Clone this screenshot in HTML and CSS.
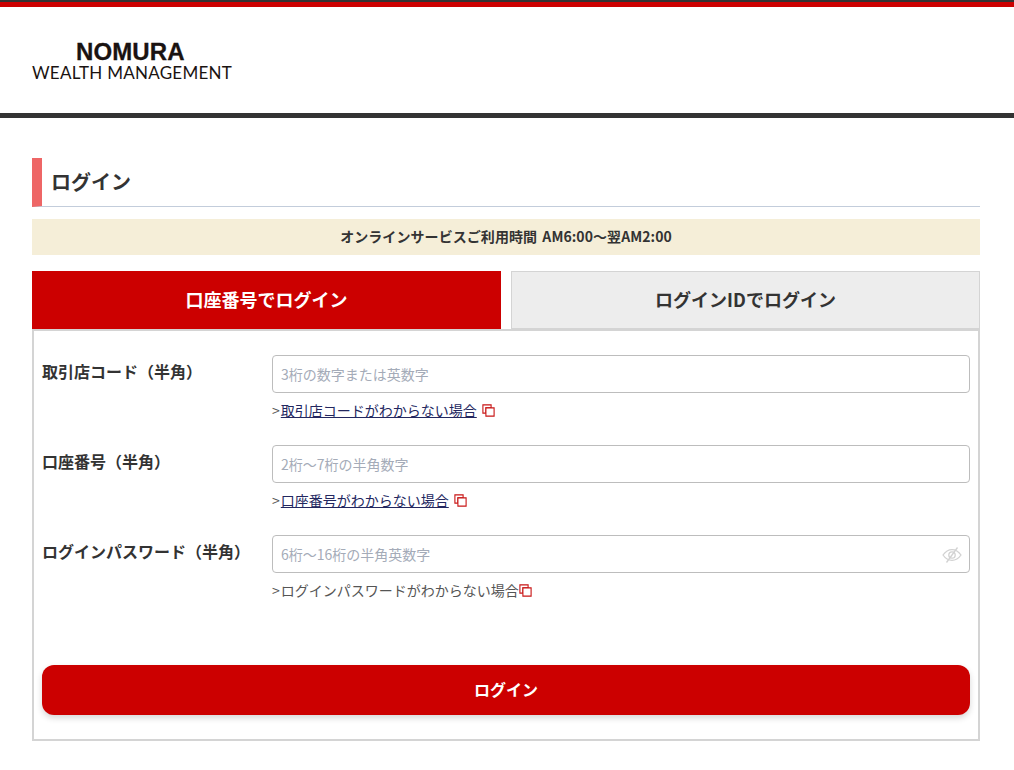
FILE: index.html
```html
<!DOCTYPE html>
<html lang="ja">
<head>
<meta charset="utf-8">
<title>ログイン</title>
<link rel="stylesheet" href="styles.css">
</head>
<body>
<header class="site-header">
  <div class="logo">
    <div class="logo-main">NOMURA</div>
    <div class="logo-sub">WEALTH MANAGEMENT</div>
  </div>
</header>
<main class="content">
  <h1 class="page-title">ログイン</h1>
  <p class="notice">オンラインサービスご利用時間 AM6:00～翌AM2:00</p>
  <div class="tabs">
    <div class="tab tab-active">口座番号でログイン</div>
    <div class="tab">ログインIDでログイン</div>
  </div>
  <form class="panel">
    <div class="row">
      <label class="label">取引店コード（半角）</label>
      <div class="field">
        <div class="input-box"><input class="input" placeholder="3桁の数字または英数字"></div>
        <p class="help"><span class="help-mark">&gt;</span><a class="help-link">取引店コードがわからない場合</a><svg class="ext ext-gap" viewBox="0 0 13 13"><path d="M.9.9h8.200v3H3.900v5.200H.9z" fill="#fff" stroke="#c81414" stroke-width="1.100"/><path d="M3.900 3.900h8.200v8.200H3.900z" fill="#fff" stroke="#c81414" stroke-width="1.100"/></svg></p>
      </div>
    </div>
    <div class="row">
      <label class="label">口座番号（半角）</label>
      <div class="field">
        <div class="input-box"><input class="input" placeholder="2桁～7桁の半角数字"></div>
        <p class="help"><span class="help-mark">&gt;</span><a class="help-link">口座番号がわからない場合</a><svg class="ext ext-gap" viewBox="0 0 13 13"><path d="M.9.9h8.200v3H3.900v5.200H.9z" fill="#fff" stroke="#c81414" stroke-width="1.100"/><path d="M3.900 3.900h8.200v8.200H3.900z" fill="#fff" stroke="#c81414" stroke-width="1.100"/></svg></p>
      </div>
    </div>
    <div class="row">
      <label class="label">ログインパスワード（半角）</label>
      <div class="field">
        <div class="input-box">
          <input class="input" placeholder="6桁～16桁の半角英数字">
          <svg class="eye" viewBox="0 0 20 16"><path d="M1 8c2.500-3.600 5.500-5.400 9-5.400s6.500 1.800 9 5.400c-2.500 3.600-5.500 5.400-9 5.400S3.500 11.600 1 8z" fill="none" stroke="#d2d2d2" stroke-width="1.300"/><circle cx="10" cy="8" r="3.200" fill="none" stroke="#d2d2d2" stroke-width="1.300"/><path d="M15.500 .5L4.500 15.500" stroke="#d2d2d2" stroke-width="1.300"/></svg>
        </div>
        <p class="help"><span class="help-mark">&gt;</span>ログインパスワードがわからない場合<svg class="ext" viewBox="0 0 13 13"><path d="M.9.9h8.200v3H3.900v5.200H.9z" fill="#fff" stroke="#c81414" stroke-width="1.100"/><path d="M3.900 3.900h8.200v8.200H3.900z" fill="#fff" stroke="#c81414" stroke-width="1.100"/></svg></p>
      </div>
    </div>
    <button class="submit" type="button"><span class="submit-text">ログイン</span></button>
  </form>
</main>
</body>
</html>
```

FILE: styles.css
```css
* { box-sizing: border-box; }
html, body { margin: 0; padding: 0; }
body {
  background: #fff;
  color: #333;
  font-family: "Noto Sans CJK JP", "Noto Sans", sans-serif;
  font-size: 14px;
}
.site-header {
  height: 118px;
  border-top: 7px solid #c00;
  border-bottom: 5px solid #333;
  position: relative;
  padding: 33px 0 0 32px;
}
.site-header::before {
  content: "";
  position: absolute;
  left: 0; right: 0; top: -7px;
  height: 2px;
  background: #333;
}
.logo { width: 200px; color: #1a1311; }
.logo-main {
  font-family: "Liberation Sans", sans-serif;
  font-weight: 700;
  font-size: 24px;
  line-height: 24px;
  padding-left: 44px;
  letter-spacing: .1px;
  -webkit-text-stroke: .3px #1a1311;
}
.logo-sub {
  font-family: "Lato", sans-serif;
  font-size: 17px;
  line-height: 18px;
  letter-spacing: .25px;
  white-space: nowrap;
}
.content { padding: 40px 34px 0 32px; }
.page-title {
  margin: 0;
  height: 49px;
  border-left: 10px solid #ee6666;
  border-bottom: 1px solid #c3cddb;
  padding-left: 9px;
  font-size: 20px;
  line-height: 47px;
  font-weight: 700;
}
.notice {
  margin: 12px 0 16px;
  height: 36px;
  background: #f5eed8;
  text-align: center;
  font-weight: 700;
  line-height: 34px;
  word-spacing: 2px;
  letter-spacing: .07px;
}
.tabs { display: flex; gap: 10px; }
.tab {
  flex: 1;
  height: 58px;
  background: #ededed;
  border: 1px solid #d4d4d4;
  text-align: center;
  font-size: 18px;
  font-weight: 700;
  line-height: 54px;
}
.tab-active { background: #c00; border-color: #c00; color: #fff; }
.panel {
  border: 2px solid #d4d4d4;
  height: 412px;
  padding: 24px 8px 0;
  display: flex;
  flex-direction: column;
}
.row { display: flex; height: 90px; }
.label {
  width: 230px;
  font-size: 16px;
  font-weight: 700;
  line-height: 32px;
  white-space: nowrap;
}
.field { flex: 1; }
.input-box { position: relative; }
.input {
  display: block;
  width: 100%;
  height: 38px;
  border: 1px solid #bdbdbd;
  border-radius: 4px;
  padding: 0 8px 1px;
  background: #fff;
  font: inherit;
  color: #333;
  outline: 0;
}
.input::placeholder { color: #a4abb8; opacity: 1; }
.eye {
  position: absolute;
  right: 8px;
  top: 12px;
  width: 20px;
  height: 16px;
}
.help {
  margin: 7px 0 0;
  height: 20px;
  line-height: 20px;
  color: #555;
  display: flex;
  align-items: center;
  white-space: nowrap;
}
.help-mark { margin-right: 1px; }
.help-link { color: #23275f; text-decoration: underline; }
.ext { width: 13px; height: 13px; flex: none; margin-top: 1px; }
.ext-gap { margin-left: 5px; }
.submit {
  margin-top: 40px;
  height: 50px;
  border: 0;
  border-radius: 12px;
  background: #c00;
  color: #fff;
  font: inherit;
  font-size: 16px;
  font-weight: 700;
  box-shadow: 0 3px 6px rgba(0, 0, 0, .16);
}
.submit-text { display: block; margin-top: -2px; }
```
